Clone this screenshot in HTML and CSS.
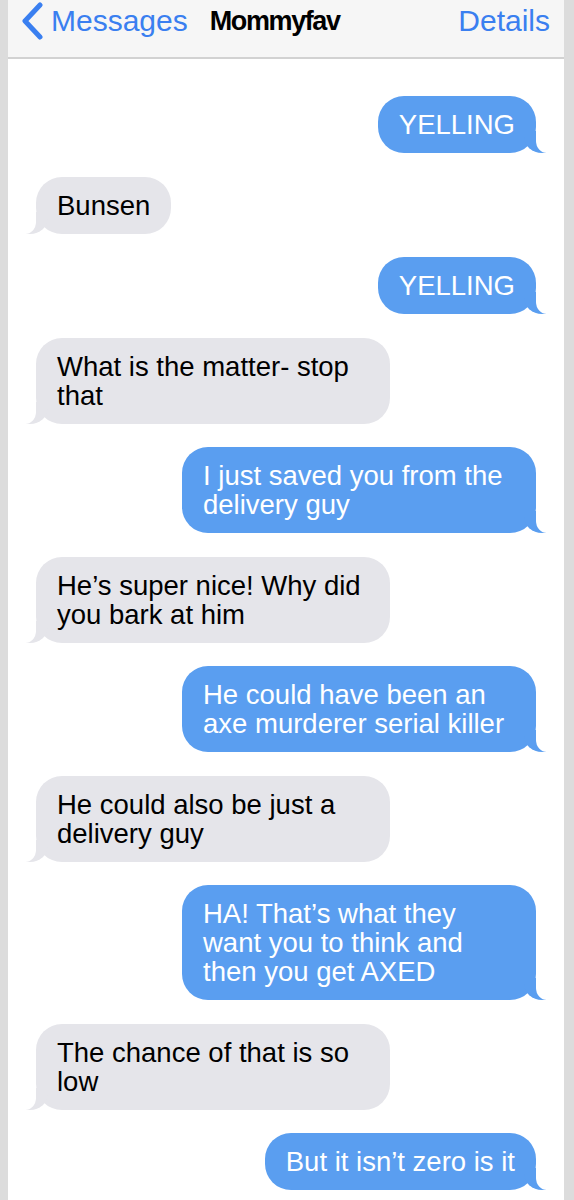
FILE: index.html
```html
<!DOCTYPE html>
<html lang="en">
<head>
    <meta charset="UTF-8">
    <meta name="viewport" content="width=device-width, initial-scale=1.0">
    <title>Mommyfav</title>
    <link rel="stylesheet" href="styles.css">
</head>
<body>
    <div class="screen">
        <div class="nav-bar">
            <div class="back">
                <svg class="chevron" width="24" height="38" viewBox="0 0 24 38">
                    <path d="M20 3 L5 19 L20 35" fill="none" stroke="#3a7ff0" stroke-width="5" stroke-linecap="round" stroke-linejoin="round"/>
                </svg>
                <span>Messages</span>
            </div>
            <div class="title">Mommyfav</div>
            <div class="details">Details</div>
        </div>

        <div class="thread">
            <div class="bubble sent">YELLING</div>
            <div class="bubble received">Bunsen</div>
            <div class="bubble sent">YELLING</div>
            <div class="bubble received wide">What is the matter- stop that</div>
            <div class="bubble sent wide">I just saved you from the delivery guy</div>
            <div class="bubble received wide">He’s super nice! Why did you bark at him</div>
            <div class="bubble sent wide">He could have been an axe murderer serial killer</div>
            <div class="bubble received wide">He could also be just a delivery guy</div>
            <div class="bubble sent wide">HA! That’s what they want you to think and then you get AXED</div>
            <div class="bubble received wide">The chance of that is so low</div>
            <div class="bubble sent">But it isn’t zero is it</div>
        </div>
    </div>
</body>
</html>
```

FILE: styles.css
```css
body { margin: 0; background-color: #dcdcdc; font-family: "Liberation Sans", Arial, sans-serif; }
.screen { width: 556px; margin-left: 8px; background-color: #fff; min-height: 1200px; }

.nav-bar {
    display: flex;
    align-items: center;
    height: 42px;
    padding: 0 14px 15px 12px;
    background-color: #f6f6f6;
    border-bottom: 2px solid #d2d2d2;
    font-size: 30px;
}
.back { display: flex; align-items: center; gap: 7px; color: #3a7ff0; }
.title { font-weight: bold; font-size: 27px; letter-spacing: -1.4px; color: #000; margin-left: 22px; }
.details { color: #3a7ff0; margin-left: auto; }

.thread {
    display: flex;
    flex-direction: column;
    gap: 23.5px;
    padding: 37px 28px 40px 28px;
}

.bubble {
    position: relative;
    font-size: 27.5px;
    line-height: 29px;
    padding: 14px 21px;
    border-radius: 26px;
    max-width: 312px;
}
.bubble.wide { width: 312px; }

.sent { align-self: flex-end; background-color: #5a9ef0; color: #fff; }
.received { align-self: flex-start; background-color: #e5e5ea; color: #000; }

.sent::before, .received::before {
    content: "";
    position: absolute;
    bottom: 0;
    width: 22px;
    height: 22px;
}
.sent::after, .received::after {
    content: "";
    position: absolute;
    bottom: 0;
    width: 22px;
    height: 24px;
    background-color: #fff;
}
.sent::before { right: -10px; background-color: #5a9ef0; border-bottom-left-radius: 18px 16px; }
.sent::after { right: -22px; border-bottom-left-radius: 11px 12px; }
.received::before { left: -10px; background-color: #e5e5ea; border-bottom-right-radius: 18px 16px; }
.received::after { left: -22px; border-bottom-right-radius: 11px 12px; }
```
